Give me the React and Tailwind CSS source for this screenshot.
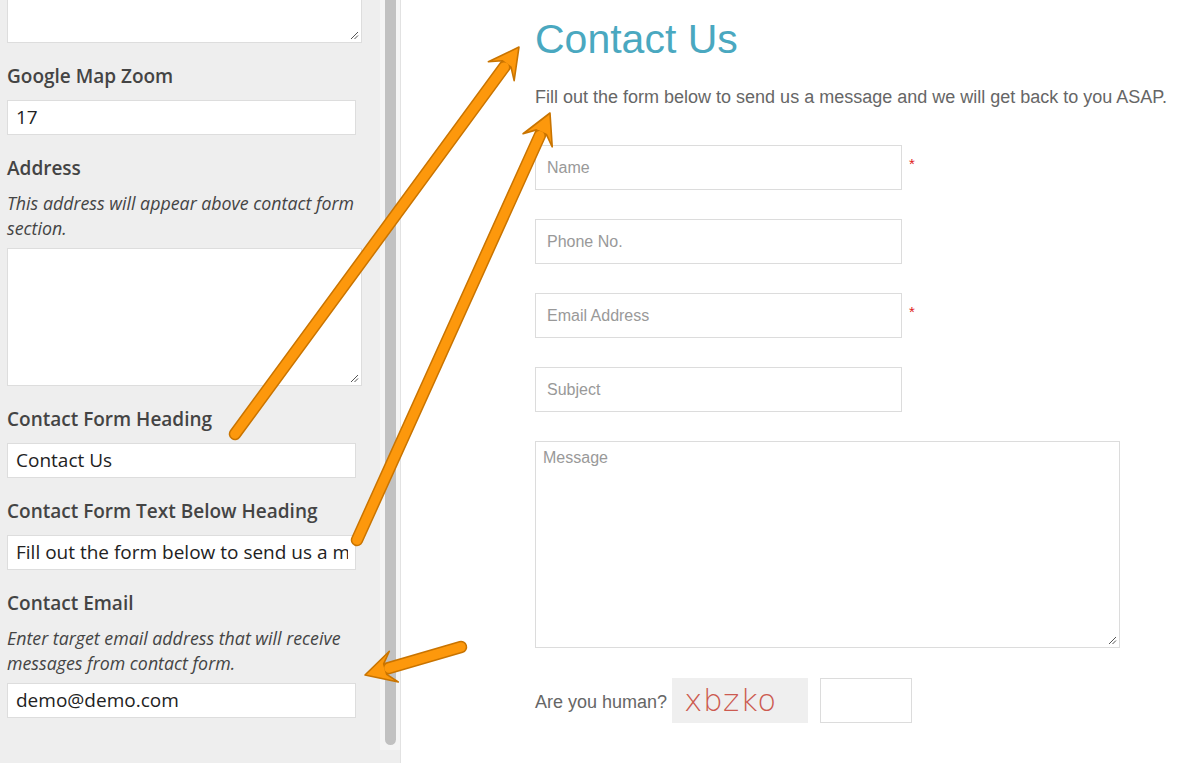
import React from 'react';

const sans = { fontFamily: '"Open Sans", "DejaVu Sans", sans-serif' };
const arial = { fontFamily: '"Liberation Sans", Arial, sans-serif' };

// one orange annotation arrow, from tail (sx,sy) to tip (tx,ty)
const Arrow = ({ sx, sy, tx, ty }) => {
  const len = Math.hypot(tx - sx, ty - sy);
  const dx = (tx - sx) / len;
  const dy = (ty - sy) / len;
  const nx = -dy;
  const ny = dx;
  const L = 30;
  const W = 16;
  const p = (a, b) => `${tx - dx * a + nx * b},${ty - dy * a + ny * b}`;
  const head = [p(0, 0), p(L, W), p(L - 9, 5.5), p(L - 9, -5.5), p(L, -W)].join(' ');
  const e1 = [tx - dx * (L - 7), ty - dy * (L - 7)];
  const e2 = [tx - dx * (L - 5), ty - dy * (L - 5)];
  return (
    <g>
      <line x1={sx} y1={sy} x2={e1[0]} y2={e1[1]} stroke="#c97400" strokeWidth="12.5" strokeLinecap="round" />
      <polygon points={head} fill="#fd980c" stroke="#c97400" strokeWidth="1.6" strokeLinejoin="round" />
      <line x1={sx} y1={sy} x2={e2[0]} y2={e2[1]} stroke="#fd980c" strokeWidth="9.5" strokeLinecap="round" />
    </g>
  );
};

const Label = ({ children }) => (
  <div className="mt-[20px] h-[26px] text-[19px] leading-[26px] font-semibold text-[#444]">{children}</div>
);

const Help = ({ children }) => (
  <div className="mt-[10px] text-[17.8px] leading-[25px] italic text-[#444]">{children}</div>
);

const AdminInput = ({ value, className = 'mt-[11px]' }) => (
  <div className={`${className} w-[349px] h-[35px] bg-white border border-[#dddddd] pl-[8px] pr-[7px]`}>
    <div className="overflow-hidden whitespace-nowrap text-[19px] leading-[33px] text-[#222]">{value}</div>
  </div>
);

const Grip = () => (
  <svg width="10" height="10" viewBox="0 0 10 10" className="absolute right-[2px] bottom-[2px]">
    <line x1="2" y1="9" x2="9" y2="2" stroke="#555" strokeWidth="1" />
    <line x1="5.5" y1="9" x2="9" y2="5.5" stroke="#555" strokeWidth="1" />
  </svg>
);

const Field = ({ placeholder, required }) => (
  <div className="flex items-start">
    <div className="w-[367px] h-[45px] border border-[#dcdcdc] px-[11px] text-[16px] leading-[43px] text-[#999]" style={arial}>
      {placeholder}
    </div>
    {required && <span className="ml-[7px] mt-[11px] text-[15px] leading-none text-[#e02020]" style={arial}>*</span>}
  </div>
);

export default function App() {
  return (
    <div className="relative w-[1200px] h-[763px] overflow-hidden flex bg-white">
      {/* settings panel */}
      <div className="flex w-[401px] h-full bg-[#eeeeee] border-r border-[#e2e2e2]" style={sans}>
        <div className="w-[380px] pl-[7px]">
          <div className="relative -mt-px w-[355px] h-[44px] bg-white border border-[#dddddd]">
            <Grip />
          </div>

          <Label>Google Map Zoom</Label>
          <AdminInput value="17" />

          <Label>Address</Label>
          <Help>This address will appear above contact form section.</Help>
          <div className="relative mt-[7px] w-[355px] h-[138px] bg-white border border-[#dddddd]">
            <Grip />
          </div>

          <Label>Contact Form Heading</Label>
          <AdminInput value="Contact Us" />

          <Label>Contact Form Text Below Heading</Label>
          <AdminInput value="Fill out the form below to send us a message and we will get back to you ASAP." />

          <Label>Contact Email</Label>
          <Help>Enter target email address that will receive messages from contact form.</Help>
          <AdminInput value="demo@demo.com" className="mt-[7px]" />
        </div>
        {/* scrollbar */}
        <div className="w-[20px] h-[750px] bg-[#f4f4f4] pl-[5px] pr-[4px]">
          <div className="w-[11px] h-[745px] bg-[#c1c1c1] rounded-b-full"></div>
        </div>
      </div>

      {/* front-end preview */}
      <div className="flex-1 pl-[134px]" style={arial}>
        <h1 className="mt-[16px] text-[41px] leading-[46px] text-[#4aa8c0]">Contact Us</h1>
        <p className="mt-[24px] text-[18px] leading-[22px] text-[#666]">
          Fill out the form below to send us a message and we will get back to you ASAP.
        </p>
        <div className="mt-[37px] flex flex-col gap-[29px]">
          <Field placeholder="Name" required />
          <Field placeholder="Phone No." />
          <Field placeholder="Email Address" required />
          <Field placeholder="Subject" />
          <div className="relative w-[585px] h-[207px] border border-[#dcdcdc] px-[7px] pt-[6px] text-[16px] leading-[20px] text-[#999]">
            Message
            <Grip />
          </div>
        </div>
        <div className="mt-[30px] flex items-center">
          <span className="mt-[4px] text-[18px] text-[#666]">Are you human?</span>
          <div className="ml-[5px] w-[136px] h-[45px] bg-[#efefef] pl-[12px] text-[31px] leading-[44px] tracking-[0.5px] text-[#cc5a50]" style={{ fontFamily: '"DejaVu Sans", sans-serif', fontWeight: 300 }}>
            xbzko
          </div>
          <div className="ml-[12px] w-[92px] h-[45px] border border-[#dcdcdc]"></div>
        </div>
      </div>

      {/* annotation arrows */}
      <svg className="absolute inset-0 pointer-events-none" width="1200" height="763">
        <Arrow sx={235} sy={434} tx={519} ty={47} />
        <Arrow sx={357} sy={540} tx={550} ty={113} />
        <Arrow sx={461} sy={647} tx={365} ty={675} />
      </svg>
    </div>
  );
}
